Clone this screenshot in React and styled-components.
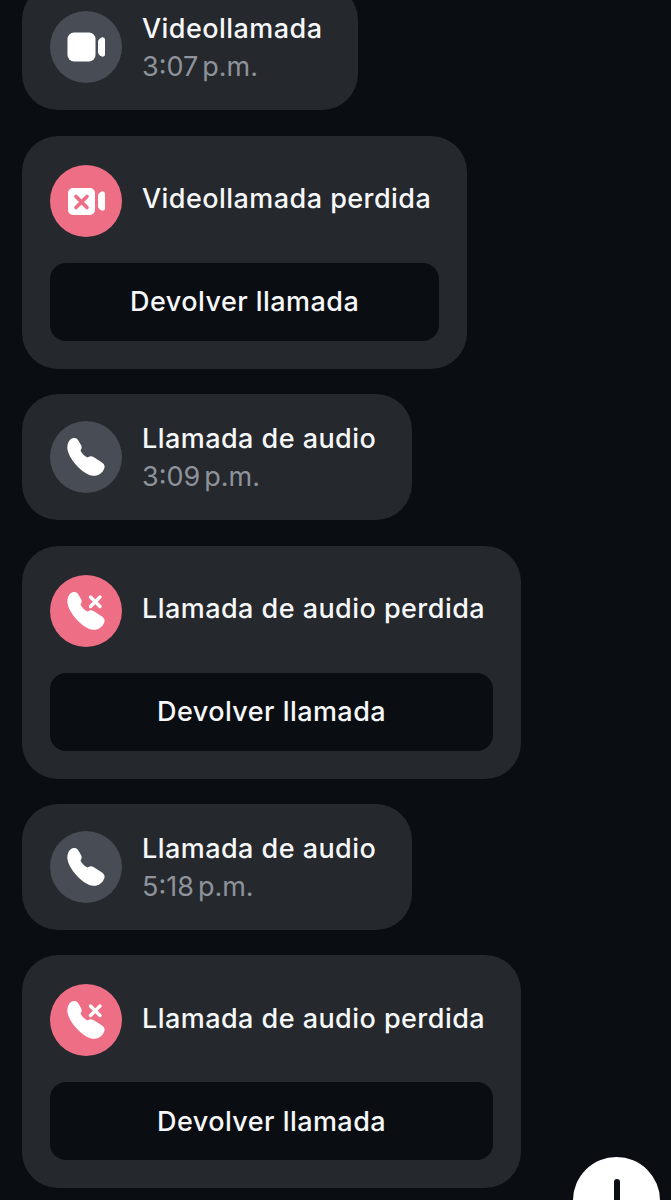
import React from "react";
import styled, { createGlobalStyle } from "styled-components";

const GlobalStyle = createGlobalStyle`
  html, body {
    margin: 0;
    padding: 0;
    background: #0a0d11;
    font-family: "Inter", "Liberation Sans", sans-serif;
    -webkit-font-smoothing: antialiased;
  }
`;

const cameraSide =
  "M32 10c0-1.300.6-2.400 1.700-3.200l1.600-1.100c1.500-1 3.700.1 3.700 2v14.600c0 1.900-2.200 3-3.700 2l-1.600-1.100c-1.100-.8-1.700-1.900-1.700-3.200z";

function VideoIcon() {
  return (
    <svg width="40" height="30" viewBox="0 0 40 30" fill="#fff">
      <rect x="1.500" y="0.500" width="28" height="29" rx="6.500" />
      <path d={cameraSide} />
    </svg>
  );
}

function MissedVideoIcon() {
  return (
    <svg width="40" height="30" viewBox="0 0 40 30" fill="#fff">
      <rect x="2" y="2" width="27" height="27" rx="5" />
      <path d="M10 10.500 21 21.500M21 10.500 10 21.500" stroke="#ee6e85" strokeWidth="3.600" strokeLinecap="round" />
      <path d={cameraSide} />
    </svg>
  );
}

const handset =
  "M4 1C6-.3 9.500-.3 11 2L14 7C15 9 14.800 10.500 14 11.500L13.500 12.500C14.500 15 17.500 18 20.500 19.500L21.500 19C23 18 25 18.200 26.500 19L35 24.500C37.500 26 38.300 29 37 31C35.500 35 31 38.300 26 37.800C17 37 3 23 .6 12C-.3 8 1 3 4 1Z";

function PhoneIcon() {
  return (
    <svg width="38" height="38" viewBox="0 0 38 38" fill="#fff">
      <path d={handset} />
    </svg>
  );
}

function MissedPhoneIcon() {
  return (
    <svg width="38" height="38" viewBox="0 0 38 38" fill="#fff">
      <path d={handset} />
      <path d="M23.500 5 33 14.500M33 5 23.500 14.500" stroke="#fff" strokeWidth="3.400" strokeLinecap="round" />
    </svg>
  );
}

const calls = [
  { title: "Videollamada", time: "3:07", kind: "video" },
  { title: "Videollamada perdida", kind: "video", missed: true },
  { title: "Llamada de audio", time: "3:09", kind: "audio" },
  { title: "Llamada de audio perdida", kind: "audio", missed: true },
  { title: "Llamada de audio", time: "5:18", kind: "audio" },
  { title: "Llamada de audio perdida", kind: "audio", missed: true },
];

function callIcon(call) {
  if (call.kind === "video") return call.missed ? <MissedVideoIcon /> : <VideoIcon />;
  return call.missed ? <MissedPhoneIcon /> : <PhoneIcon />;
}

export default function App() {
  return (
    <Page>
      <GlobalStyle />
      <List>
        {calls.map((call, i) => (
          <Bubble key={i} $missed={call.missed}>
            <Row>
              <IconCircle $missed={call.missed}>{callIcon(call)}</IconCircle>
              <Info $missed={call.missed}>
                <Title>{call.title}</Title>
                {call.time && (
                  <Time>
                    {call.time}
                    <Meridiem>p.m.</Meridiem>
                  </Time>
                )}
              </Info>
            </Row>
            {call.missed && <CallBack>Devolver llamada</CallBack>}
          </Bubble>
        ))}
      </List>
      <ScrollButton>
        <ArrowStem />
      </ScrollButton>
    </Page>
  );
}

const Page = styled.div`
  position: relative;
  width: 671px;
  height: 1200px;
  overflow: hidden;
  background: #0a0d11;
`;

const List = styled.div`
  display: flex;
  flex-direction: column;
  align-items: flex-start;
  gap: 25.375px;
  margin-top: -15.6px;
  padding-left: 22px;
`;

const Bubble = styled.div`
  box-sizing: border-box;
  display: flex;
  flex-direction: column;
  gap: 26px;
  padding: ${(p) => (p.$missed ? "29px 36px 28px 28px" : "27px 36px 27px 28px")};
  border-radius: 36px;
  background: #25282c;
`;

const Row = styled.div`
  display: flex;
  align-items: center;
  gap: 20px;
`;

const IconCircle = styled.div`
  display: flex;
  align-items: center;
  justify-content: center;
  flex: none;
  width: 72px;
  height: 72px;
  border-radius: 50%;
  background: ${(p) => (p.$missed ? "#ee6e85" : "#474c55")};
`;

const Info = styled.div`
  display: flex;
  flex-direction: column;
  gap: 4px;
  padding: ${(p) => (p.$missed ? "0 0 3px" : "1px 0 0")};
  margin-bottom: ${(p) => (p.$missed ? "0" : "-1px")};
`;

const Title = styled.div`
  color: #f6f7f8;
  font-size: 27px;
  font-weight: 500;
  letter-spacing: 0.45px;
  line-height: 34px;
  white-space: nowrap;
`;

const Time = styled.div`
  color: #8e939b;
  font-size: 27px;
  font-weight: 400;
  line-height: 34px;
  white-space: nowrap;
`;

const Meridiem = styled.span`
  margin-left: 4px;
`;

const CallBack = styled.button`
  box-sizing: border-box;
  width: calc(100% + 8px);
  height: 78px;
  border: 0;
  border-radius: 16px;
  background: #0a0d11;
  color: #f6f7f8;
  font-family: inherit;
  font-size: 27px;
  font-weight: 500;
  letter-spacing: 0.45px;
`;

const ScrollButton = styled.div`
  position: absolute;
  left: 573px;
  top: 1157px;
  display: flex;
  justify-content: center;
  width: 87px;
  height: 87px;
  border-radius: 50%;
  background: #fff;
`;

const ArrowStem = styled.div`
  width: 6px;
  height: 40px;
  margin-top: 22px;
  border-radius: 3px;
  background: #0a0d11;
`;
